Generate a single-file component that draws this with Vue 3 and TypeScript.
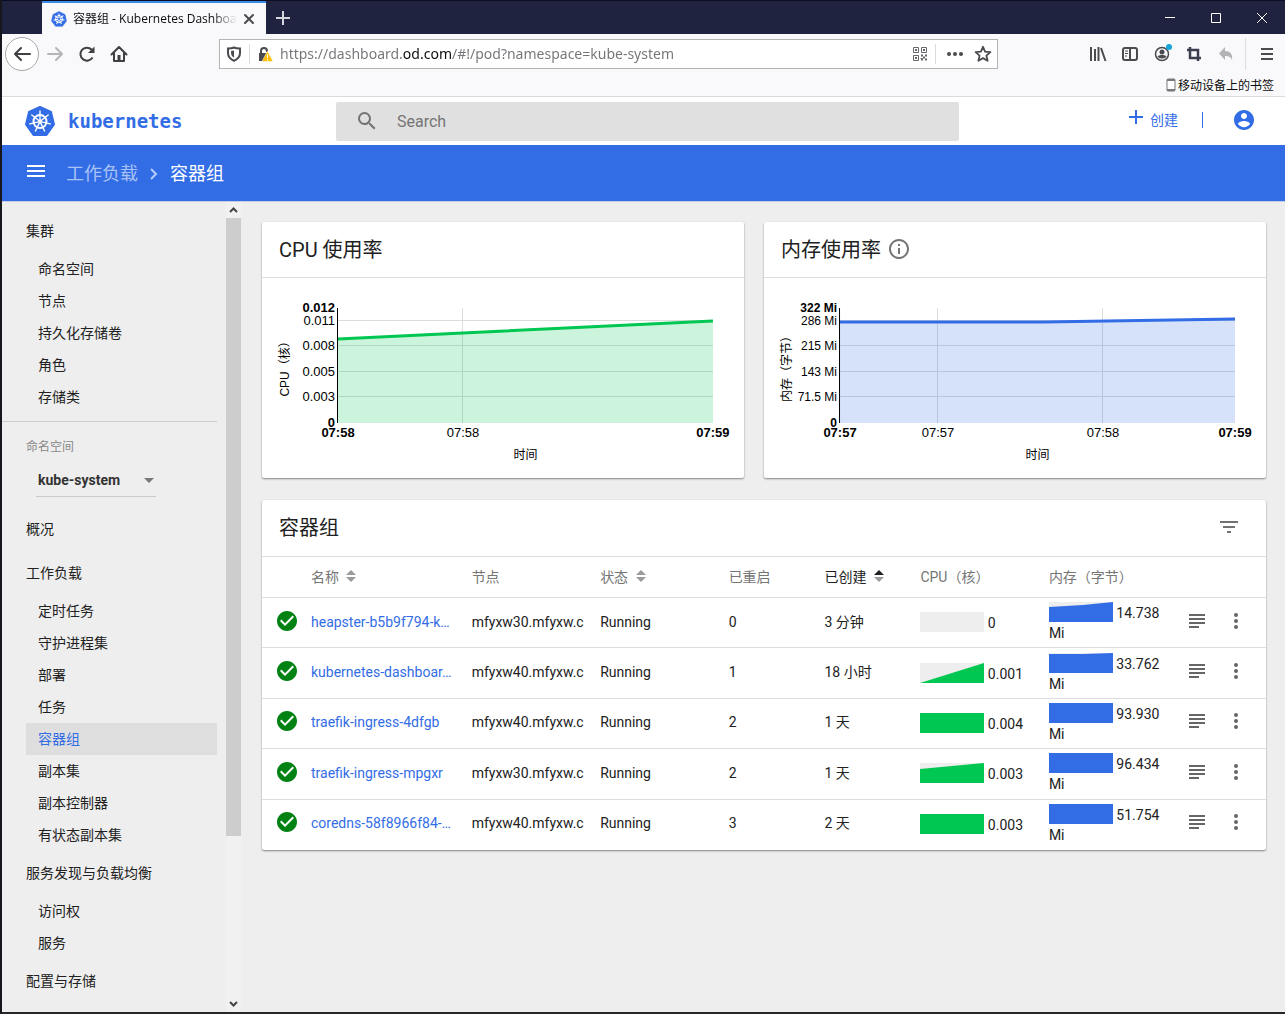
<script setup lang="ts">
import { ref } from 'vue'

interface NavGroup {
  title: string
  items: string[]
}

interface Tick {
  label: string
  at: number
  bold?: boolean
}

interface Chart {
  id: string
  title: string
  info: boolean
  width: number
  axis: string
  color: string
  labelSize: string
  left: number
  right: number
  xTicks: Tick[]
  yTicks: Tick[]
  points: [number, number][]
}

interface Pod {
  name: string
  node: string
  status: string
  restarts: number
  age: string
  cpu: string
  cpuShape: string
  memory: string
  memoryShape: string
}

const url = ref('https://dashboard.od.com/#!/pod?namespace=kube-system')
const query = ref('')
const namespace = ref('kube-system')
const activeItem = '容器组'

const cluster: NavGroup = { title: '集群', items: ['命名空间', '节点', '持久化存储卷', '角色', '存储类'] }

const groups: NavGroup[] = [
  { title: '概况', items: [] },
  { title: '工作负载', items: ['定时任务', '守护进程集', '部署', '任务', '容器组', '副本集', '副本控制器', '有状态副本集'] },
  { title: '服务发现与负载均衡', items: ['访问权', '服务'] },
  { title: '配置与存储', items: [] },
]

const spokes = [0, 1, 2, 3, 4, 5, 6].map((i) => (i * 360) / 7)

const charts: Chart[] = [
  {
    id: 'cpu',
    title: 'CPU 使用率',
    info: false,
    width: 482,
    axis: 'CPU（核）',
    color: '#00c752',
    labelSize: 'wide',
    left: 76,
    right: 451,
    xTicks: [
      { label: '07:58', at: 76, bold: true },
      { label: '07:58', at: 201 },
      { label: '07:59', at: 451, bold: true },
    ],
    yTicks: [
      { label: '0.012', at: 30, bold: true },
      { label: '0.011', at: 43 },
      { label: '0.008', at: 68 },
      { label: '0.005', at: 94 },
      { label: '0.003', at: 119 },
      { label: '0', at: 145, bold: true },
    ],
    points: [[76, 61], [201, 55], [451, 43]],
  },
  {
    id: 'memory',
    title: '内存使用率',
    info: true,
    width: 502,
    axis: '内存（字节）',
    color: '#326de6',
    labelSize: 'narrow',
    left: 76,
    right: 471,
    xTicks: [
      { label: '07:57', at: 76, bold: true },
      { label: '07:57', at: 174 },
      { label: '07:58', at: 339 },
      { label: '07:59', at: 471, bold: true },
    ],
    yTicks: [
      { label: '322 Mi', at: 30, bold: true },
      { label: '286 Mi', at: 43 },
      { label: '215 Mi', at: 68 },
      { label: '143 Mi', at: 94 },
      { label: '71.5 Mi', at: 119 },
      { label: '0', at: 145, bold: true },
    ],
    points: [[76, 44], [280, 44], [471, 41]],
  },
]

const linePath = (c: Chart): string => 'M' + c.points.map((p) => p.join(' ')).join('L')
const areaPath = (c: Chart): string => `${linePath(c)}V145H${c.left}Z`

const columns = [
  { key: 'name', label: '名称', sort: 'none' },
  { key: 'node', label: '节点', sort: '' },
  { key: 'status', label: '状态', sort: 'none' },
  { key: 'restarts', label: '已重启', sort: '' },
  { key: 'age', label: '已创建', sort: 'up' },
  { key: 'cpu', label: 'CPU（核）', sort: '' },
  { key: 'memory', label: '内存（字节）', sort: '' },
]

const pods: Pod[] = [
  { name: 'heapster-b5b9f794-k…', node: 'mfyxw30.mfyxw.c', status: 'Running', restarts: 0, age: '3 分钟', cpu: '0', cpuShape: '', memory: '14.738 Mi', memoryShape: '0,5 34,3 64,0 64,20 0,20' },
  { name: 'kubernetes-dashboar…', node: 'mfyxw40.mfyxw.c', status: 'Running', restarts: 1, age: '18 小时', cpu: '0.001', cpuShape: '0,20 64,0 64,20', memory: '33.762 Mi', memoryShape: '0,1 34,1 64,0 64,20 0,20' },
  { name: 'traefik-ingress-4dfgb', node: 'mfyxw40.mfyxw.c', status: 'Running', restarts: 2, age: '1 天', cpu: '0.004', cpuShape: '0,0 64,0 64,20 0,20', memory: '93.930 Mi', memoryShape: '0,0 64,0 64,20 0,20' },
  { name: 'traefik-ingress-mpgxr', node: 'mfyxw30.mfyxw.c', status: 'Running', restarts: 2, age: '1 天', cpu: '0.003', cpuShape: '0,6 64,0 64,20 0,20', memory: '96.434 Mi', memoryShape: '0,0 64,0 64,20 0,20' },
  { name: 'coredns-58f8966f84-…', node: 'mfyxw40.mfyxw.c', status: 'Running', restarts: 3, age: '2 天', cpu: '0.003', cpuShape: '0,0 64,0 64,20 0,20', memory: '51.754 Mi', memoryShape: '0,0 64,0 64,20 0,20' },
]
</script>

<template>
  <div class="window">
    <div class="titlebar">
      <div class="tab">
        <svg class="tab-logo" viewBox="0 0 32 32" aria-hidden="true">
          <path d="M16 1 28 7 31 20 23 30.500H9L1 20 4 7Z" fill="#326de6" stroke="#326de6" stroke-linejoin="round" />
          <g stroke="#fff" fill="none" stroke-width="2">
            <circle cx="16" cy="16" r="7" />
            <path v-for="a in spokes" :key="a" d="M16 14V5" :transform="`rotate(${a} 16 16)`" />
          </g>
        </svg>
        <span class="tab-title">容器组 - Kubernetes Dashboard</span>
        <button class="plain" aria-label="关闭标签页">
          <svg width="12" height="12" viewBox="0 0 12 12"><path d="M2 2l8 8M10 2l-8 8" stroke="#4a4a4f" stroke-width="2" stroke-linecap="round" /></svg>
        </button>
      </div>
      <button class="plain new-tab" aria-label="新建标签页">
        <svg width="14" height="14" viewBox="0 0 14 14"><path d="M7 0v14M0 7h14" stroke="#d5d5de" stroke-width="2" /></svg>
      </button>
      <div class="window-controls">
        <button class="plain" aria-label="最小化"><svg width="12" height="12" viewBox="0 0 12 12"><path d="M1 5.500h10" stroke="#fff" /></svg></button>
        <button class="plain" aria-label="最大化"><svg width="12" height="12" viewBox="0 0 12 12"><path d="M1.500 1.500h9v9h-9z" stroke="#fff" fill="none" /></svg></button>
        <button class="plain" aria-label="关闭"><svg width="12" height="12" viewBox="0 0 12 12"><path d="M1 1l10 10M11 1L1 11" stroke="#fff" /></svg></button>
      </div>
    </div>

    <div class="toolbar">
      <div class="history">
        <button class="plain back" aria-label="后退">
          <svg width="18" height="18" viewBox="0 0 18 18"><path d="M17 9H2M8 3 2 9l6 6" fill="none" stroke="#3f3f44" stroke-width="2" stroke-linejoin="round" stroke-linecap="round" /></svg>
        </button>
        <button class="plain" aria-label="前进">
          <svg width="18" height="18" viewBox="0 0 18 18"><path d="M2 9h14M10 3l6 6-6 6" fill="none" stroke="#b4b4b8" stroke-width="2" stroke-linejoin="round" stroke-linecap="round" /></svg>
        </button>
        <button class="plain" aria-label="刷新">
          <svg width="18" height="18" viewBox="0 0 18 18"><path d="M14.500 12.500A6.500 6.500 0 1 1 13.500 4.500L15 6" fill="none" stroke="#3f3f44" stroke-width="2" /><path d="M16.500 1.500V8H10z" fill="#3f3f44" /></svg>
        </button>
        <button class="plain" aria-label="主页">
          <svg width="18" height="18" viewBox="0 0 18 18"><path d="M1.500 9.500 9 2l7.500 7.500M4 8.500V16h10V8.500" fill="none" stroke="#3f3f44" stroke-width="2" stroke-linejoin="round" stroke-linecap="round" /><path d="M7.500 10h3v6h-3z" fill="#3f3f44" /></svg>
        </button>
      </div>

      <div class="address">
        <svg width="16" height="16" viewBox="0 0 16 16"><path d="M8 1.500c2 1 4 1 6 1v4.500c0 4-3 6.500-6 7.800C5 13.500 2 11 2 7V2.500c2 0 4 0 6-1z" fill="none" stroke="#4a4a4f" stroke-width="2" /><path d="M8 4.500v7C5.500 10 5 9 5 5z" fill="#4a4a4f" /></svg>
        <span class="bar"></span>
        <svg width="16" height="16" viewBox="0 0 16 16"><path d="M4 7V5a3 3 0 0 1 6 0v1" fill="none" stroke="#4a4a4f" stroke-width="2" /><path d="M2 7h9v8H2z" fill="#4a4a4f" /><path d="M10.500 5 16 15.500H5z" fill="#ffbf00" stroke="#fff" stroke-width="0.500" /><path d="M10.500 8.500v3.500M10.500 13v1.500" stroke="#fff" /></svg>
        <input v-model="url" class="url" type="text" aria-label="网址" />
        <svg width="16" height="16" viewBox="0 0 16 16" fill="none" stroke="#66666b"><path d="M1.500 1.500h5v5h-5zM9.500 1.500h5v5h-5zM1.500 9.500h5v5h-5z" /><path d="M3 4h2M11 4h2M3 12h2" stroke-width="2" /><path d="M9 9.500h2M13 9.500h2M11 11.500h2M9 13.500h2M13 13.500h2M9.500 12v1" stroke-width="2" /></svg>
        <span class="bar"></span>
        <button class="plain dots" aria-label="页面操作"><svg width="18" height="6" viewBox="0 0 18 6" fill="#4a4a4f"><circle cx="3" cy="3" r="2" /><circle cx="9" cy="3" r="2" /><circle cx="15" cy="3" r="2" /></svg></button>
        <button class="plain" aria-label="添加书签"><svg width="18" height="18" viewBox="0 0 18 18"><path d="M9 1.800l2.100 4.800 5.300.5-4 3.500 1.200 5.200L9 13.100l-4.600 2.700 1.200-5.200-4-3.500 5.300-.5z" fill="none" stroke="#4a4a4f" stroke-width="1.800" stroke-linejoin="round" /></svg></button>
      </div>

      <div class="tools">
        <button class="plain" aria-label="我的足迹"><svg width="18" height="16" viewBox="0 0 18 16"><path d="M2 1v14M6 3v12M9.500 1v14M12 2l4.500 13" stroke="#4a4a4f" stroke-width="2" fill="none" /></svg></button>
        <button class="plain" aria-label="侧栏"><svg width="18" height="16" viewBox="0 0 18 16"><rect x="2" y="2" width="14" height="12" rx="2" fill="none" stroke="#4a4a4f" stroke-width="2" /><path d="M9 2v12" stroke="#4a4a4f" stroke-width="2" /><path d="M4 5h3M4 7.500h3M4 10h2" stroke="#4a4a4f" /></svg></button>
        <button class="plain" aria-label="账户"><svg width="20" height="20" viewBox="0 0 20 20"><circle cx="10" cy="10" r="6.500" fill="none" stroke="#4a4a4f" stroke-width="1.500" /><circle cx="10" cy="8" r="2.500" fill="#4a4a4f" /><path d="M5.500 12.500c1-2 8-2 9 0-1.500 2.500-7.500 2.500-9 0z" fill="#4a4a4f" /><circle cx="17" cy="3" r="3" fill="#12a7d8" /></svg></button>
        <button class="plain" aria-label="截图"><svg width="16" height="16" viewBox="0 0 16 16"><path d="M4 1v11h11M1 4h11v11" fill="none" stroke="#3d3d52" stroke-width="2.500" /></svg></button>
        <button class="plain" aria-label="撤销"><svg width="16" height="16" viewBox="0 0 16 16"><path d="M7 1v4c5 0 8 3 7 9-1-3-3-4-7-4v4L1 7.500z" fill="#b4b4b8" /></svg></button>
        <span class="tools-bar"></span>
        <button class="plain" aria-label="菜单"><svg width="14" height="14" viewBox="0 0 14 14"><path d="M1 2h12M1 7h12M1 12h12" stroke="#4a4a4f" stroke-width="2" /></svg></button>
      </div>
    </div>

    <div class="bookmarks">
      <a href="#">
        <svg width="10" height="14" viewBox="0 0 10 14"><rect x="1" y="1" width="8" height="12" rx="1" fill="#fff" stroke="#77787c" /><path d="M1 2h8M1 12h8" stroke="#77787c" stroke-width="2" /></svg>
        移动设备上的书签
      </a>
    </div>

    <header class="app-header">
      <a class="brand" href="#">
        <svg width="32" height="32" viewBox="0 0 32 32" aria-hidden="true">
          <path d="M16 2 27 7 30 19.500 22.500 30h-13L2 19.500 5 7Z" fill="#326de6" stroke="#326de6" stroke-width="2" stroke-linejoin="round" />
          <g stroke="#fff" fill="none">
            <circle cx="16" cy="16.500" r="6.500" stroke-width="2" />
            <path v-for="a in spokes" :key="a" d="M16 15V6" stroke-width="1.400" stroke-linecap="round" :transform="`rotate(${a} 16 16.500)`" />
            <circle cx="16" cy="16.500" r="1.500" fill="#fff" />
          </g>
        </svg>
        <span>kubernetes</span>
      </a>
      <label class="search">
        <svg width="24" height="24" viewBox="0 0 24 24"><path d="M15.500 14h-.79l-.28-.27A6.471 6.471 0 0 0 16 9.500 6.500 6.500 0 1 0 9.500 16c1.610 0 3.090-.59 4.230-1.570l.27.28v.79l5 4.990L20.490 19l-4.990-5zm-6 0C7.010 14 5 11.990 5 9.500S7.010 5 9.500 5 14 7.010 14 9.500 11.990 14 9.500 14z" fill="#727272" /></svg>
        <input v-model="query" type="text" placeholder="Search" aria-label="Search" />
      </label>
      <div class="actions">
        <button class="plain create">
          <svg width="14" height="14" viewBox="0 0 14 14"><path d="M7 0v14M0 7h14" stroke="#326de6" stroke-width="2" /></svg>
          <span>创建</span>
        </button>
        <span class="divider"></span>
        <button class="plain" aria-label="用户">
          <svg width="24" height="24" viewBox="0 0 24 24"><path d="M12 2C6.480 2 2 6.480 2 12s4.480 10 10 10 10-4.480 10-10S17.520 2 12 2zm0 3c1.660 0 3 1.340 3 3s-1.340 3-3 3-3-1.340-3-3 1.340-3 3-3zm0 14.200c-2.500 0-4.710-1.280-6-3.220.03-1.990 4-3.080 6-3.080 1.990 0 5.970 1.090 6 3.080-1.290 1.940-3.500 3.220-6 3.220z" fill="#326de6" /></svg>
        </button>
      </div>
    </header>

    <nav class="crumbs" aria-label="路径">
      <button class="plain" aria-label="切换菜单"><svg width="18" height="12" viewBox="0 0 18 12"><path d="M0 1h18M0 6h18M0 11h18" stroke="#fff" stroke-width="2" /></svg></button>
      <div class="trail">
        <a href="#">工作负载</a>
        <svg width="8" height="12" viewBox="0 0 8 12"><path d="M1 1l5 5-5 5" fill="none" stroke="#b8ccf7" stroke-width="2" /></svg>
        <span>容器组</span>
      </div>
    </nav>

    <div class="body">
      <aside class="sidebar">
        <nav class="menu">
          <a class="heading" href="#">{{ cluster.title }}</a>
          <a v-for="item in cluster.items" :key="item" class="item" href="#">{{ item }}</a>
          <div class="namespace">
            <label for="namespace">命名空间</label>
            <div class="select">
              <select id="namespace" v-model="namespace">
                <option>kube-system</option>
                <option>default</option>
              </select>
              <svg width="10" height="5" viewBox="0 0 10 5"><path d="M0 0h10L5 5z" fill="#777" /></svg>
            </div>
          </div>
          <template v-for="group in groups" :key="group.title">
            <a class="heading" href="#">{{ group.title }}</a>
            <a v-for="item in group.items" :key="item" class="item" :class="{ active: item === activeItem }" href="#">{{ item }}</a>
          </template>
        </nav>
        <div class="scrollbar" aria-hidden="true">
          <svg width="15" height="16" viewBox="0 0 15 16"><path d="M4 10l3.500-3.500L11 10" fill="none" stroke="#444" stroke-width="2" /></svg>
          <div class="track"><div class="thumb"></div></div>
          <svg width="15" height="16" viewBox="0 0 15 16"><path d="M4 6l3.500 3.500L11 6" fill="none" stroke="#444" stroke-width="2" /></svg>
        </div>
      </aside>

      <main class="content">
        <div class="charts">
          <section v-for="chart in charts" :key="chart.id" class="card">
            <h2 class="card-title">
              {{ chart.title }}
              <svg v-if="chart.info" width="24" height="24" viewBox="0 0 24 24"><path d="M11 17h2v-6h-2v6zm1-15C6.480 2 2 6.480 2 12s4.480 10 10 10 10-4.480 10-10S17.520 2 12 2zm0 18c-4.410 0-8-3.590-8-8s3.590-8 8-8 8 3.590 8 8-3.590 8-8 8zM11 9h2V7h-2v2z" fill="#757575" /></svg>
            </h2>
            <svg class="chart" :viewBox="`0 0 ${chart.width} 200`" role="img" :aria-label="chart.title">
              <g class="grid">
                <path v-for="t in chart.yTicks.slice(1, 5)" :key="t.label" :d="`M${chart.left} ${t.at - 0.5}H${chart.right}`" />
                <path v-for="t in chart.xTicks.slice(1, -1)" :key="t.at" :d="`M${t.at - 0.5} 30V145`" />
              </g>
              <path :d="areaPath(chart)" :fill="chart.color" fill-opacity="0.2" />
              <path :d="linePath(chart)" fill="none" :stroke="chart.color" stroke-width="3" />
              <path :d="`M${chart.left - 0.5} 30V145`" stroke="#000" />
              <g class="labels">
                <text v-for="t in chart.yTicks" :key="t.label" x="73" :y="t.at + 4" text-anchor="end" :class="[chart.labelSize, { bold: t.bold }]">{{ t.label }}</text>
                <text v-for="t in chart.xTicks" :key="t.at" :x="t.at" y="159" text-anchor="middle" class="wide" :class="{ bold: t.bold }">{{ t.label }}</text>
                <text :x="(chart.left + chart.right) / 2" y="181" text-anchor="middle">时间</text>
                <text text-anchor="middle" transform="translate(27 88) rotate(-90)">{{ chart.axis }}</text>
              </g>
            </svg>
          </section>
        </div>

        <section class="card">
          <div class="card-title list-title">
            <h2>容器组</h2>
            <button class="plain" aria-label="筛选"><svg width="24" height="24" viewBox="0 0 24 24"><path d="M10 18h4v-2h-4v2zM3 6v2h18V6H3zm3 7h12v-2H6v2z" fill="#727272" /></svg></button>
          </div>
          <table>
            <colgroup>
              <col class="c-icon" /><col class="c-l" /><col class="c-m" /><col class="c-m" /><col class="c-s" /><col class="c-s" /><col class="c-m" /><col class="c-m" /><col class="c-act" /><col />
            </colgroup>
            <thead>
              <tr>
                <th></th>
                <th v-for="col in columns" :key="col.key" scope="col" :class="{ sorted: col.sort === 'up' }">
                  {{ col.label }}
                  <svg v-if="col.sort" class="sort" width="12" height="14" viewBox="0 0 12 14">
                    <path d="M1 6h10L6 1z" :fill="col.sort === 'up' ? '#212121' : '#9a9a9a'" />
                    <path d="M1 8h10l-5 5z" fill="#9a9a9a" />
                  </svg>
                </th>
                <th></th>
                <th></th>
              </tr>
            </thead>
            <tbody>
              <tr v-for="pod in pods" :key="pod.name">
                <td class="state">
                  <svg width="24" height="24" viewBox="0 0 24 24"><path d="M12 2C6.480 2 2 6.480 2 12s4.480 10 10 10 10-4.480 10-10S17.520 2 12 2zm-2 15l-5-5 1.410-1.410L10 14.170l7.590-7.590L19 8l-9 9z" fill="#018213" /></svg>
                </td>
                <td><a href="#">{{ pod.name }}</a></td>
                <td>{{ pod.node }}</td>
                <td>{{ pod.status }}</td>
                <td>{{ pod.restarts }}</td>
                <td>{{ pod.age }}</td>
                <td class="usage">
                  <svg class="spark" viewBox="0 0 64 20"><polygon :points="pod.cpuShape" fill="#00c752" /></svg>
                  {{ pod.cpu }}
                </td>
                <td class="usage">
                  <svg class="spark" viewBox="0 0 64 20"><polygon :points="pod.memoryShape" fill="#326de6" /></svg>
                  {{ pod.memory }}
                </td>
                <td class="act"><button class="plain" aria-label="日志"><svg width="24" height="24" viewBox="0 0 24 24"><path d="M4 6h16M4 10h16M4 14h16M4 18h10" stroke="#666" stroke-width="2" /></svg></button></td>
                <td class="act"><button class="plain" aria-label="操作"><svg width="24" height="24" viewBox="0 0 24 24" fill="#666"><circle cx="12" cy="6" r="2" /><circle cx="12" cy="12" r="2" /><circle cx="12" cy="18" r="2" /></svg></button></td>
              </tr>
            </tbody>
          </table>
        </section>
      </main>
    </div>
  </div>
</template>

<style>
body {
  margin: 0;
  background: #eee;
}
</style>

<style scoped>
* {
  box-sizing: border-box;
}

.window {
  display: flex;
  flex-direction: column;
  min-height: 100vh;
  border-left: 2px solid #16161c;
  border-bottom: 2px solid #26262b;
  background: #eee;
  color: #212121;
  font: 14px/20px Roboto, "Noto Sans CJK SC", sans-serif;
}

a {
  color: inherit;
  text-decoration: none;
}

svg {
  flex: none;
  display: block;
}

.plain {
  display: flex;
  flex: none;
  align-items: center;
  justify-content: center;
  padding: 0;
  border: 0;
  background: none;
  font: inherit;
  color: inherit;
}

/* browser frame */
.titlebar {
  display: flex;
  height: 34px;
  padding-left: 40px;
  border-top: 1px solid #0b0c22;
  background: #202340;
}

.tab {
  display: flex;
  align-items: center;
  width: 224px;
  padding: 0 11px 0 9px;
  border-top: 2px solid #3b8be6;
  background: #f9f9fb;
  color: #0c0c0d;
  font: 12px/18px "Open Sans", "Noto Sans CJK SC", sans-serif;
}

.tab-logo {
  width: 16px;
  height: 16px;
  margin-right: 6px;
}

.tab-title {
  flex: 1;
  overflow: hidden;
  white-space: nowrap;
  margin-right: 6px;
  mask-image: linear-gradient(to right, #000 85%, transparent);
}

.new-tab {
  width: 34px;
}

.window-controls {
  display: flex;
  margin-left: auto;
}

.window-controls .plain {
  width: 46px;
}

.toolbar {
  display: flex;
  align-items: center;
  height: 40px;
  background: #f9f9fb;
}

.history {
  display: flex;
  align-items: center;
  gap: 14px;
  width: 217px;
  padding-left: 3px;
}

.back {
  width: 34px;
  height: 34px;
  margin-right: -7px;
  border: 1px solid #a8a8ac;
  border-radius: 50%;
  background: #fff;
}

.address {
  display: flex;
  flex: 1;
  align-items: center;
  gap: 7px;
  height: 30px;
  padding: 0 5px 0 6px;
  border: 1px solid #b3b3b6;
  background: #fff;
}

.dots {
  width: 24px;
}

.bar {
  width: 1px;
  height: 20px;
  background: #dcdcdf;
}

.url {
  flex: 1;
  min-width: 0;
  padding: 0;
  border: 0;
  outline: 0;
  color: transparent;
  background: linear-gradient(to right, #737378 123px, #0c0c0d 123px, #0c0c0d 171px, #737378 171px);
  background-clip: text;
  font: 14px/20px "Noto Sans", sans-serif;
}

.tools {
  display: flex;
  align-items: center;
  justify-content: flex-end;
  gap: 14px;
  width: 287px;
  padding-right: 9px;
}

.tools .plain {
  width: 18px;
}

.tools-bar {
  width: 1px;
  height: 32px;
  margin: 0 -2px 0 -4px;
  background: #dcdcdf;
}

.bookmarks {
  display: flex;
  justify-content: flex-end;
  height: 23px;
  padding-right: 11px;
  border-bottom: 1px solid #dcdcdf;
  background: #f9f9fb;
  color: #0c0c0d;
  font: 12px/20px "Noto Sans CJK SC", sans-serif;
}

.bookmarks a {
  display: flex;
  align-items: center;
  gap: 2px;
}

/* dashboard header */
.app-header {
  display: flex;
  align-items: center;
  height: 48px;
  background: #fff;
}

.brand {
  display: flex;
  align-items: center;
  gap: 12px;
  width: 334px;
  padding-left: 22px;
  color: #326de6;
  font: bold 19px/24px "DejaVu Sans Mono", monospace;
}

.search {
  display: flex;
  flex: 1;
  align-items: center;
  gap: 18px;
  height: 39px;
  padding: 0 19px;
  border-radius: 2px;
  background: #e0e0e0;
}

.search input {
  flex: 1;
  min-width: 0;
  padding: 2px 0 0;
  border: 0;
  outline: 0;
  background: none;
  color: #212121;
  font: 16px/20px Roboto, sans-serif;
}

.search input::placeholder {
  color: #757575;
}

.actions {
  display: flex;
  align-items: center;
  justify-content: flex-end;
  gap: 24px;
  width: 326px;
  padding: 0 29px 2px 0;
}

.create {
  align-items: flex-start;
  gap: 7px;
  color: #326de6;
}

.divider {
  width: 1px;
  height: 16px;
  margin-right: 5px;
  background: #326de6;
}

.crumbs {
  display: flex;
  align-items: center;
  gap: 21px;
  height: 56px;
  padding-left: 25px;
  background: #326de6;
  color: #fff;
  font-size: 18px;
  line-height: 24px;
}

.crumbs .plain {
  padding-bottom: 4px;
}

.trail {
  display: flex;
  align-items: center;
  gap: 12px;
  padding-top: 2px;
}

.trail a {
  color: #a9c2f5;
}

.body {
  display: flex;
  flex: 1;
  border-top: 1px solid #c9cbe6;
}

/* sidebar */
.sidebar {
  display: flex;
  width: 239px;
}

.menu {
  display: flex;
  flex: 1;
  flex-direction: column;
  padding: 7px 9px 0 0;
}

.heading {
  padding-left: 24px;
  line-height: 44px;
}

.item {
  margin-left: 24px;
  padding-left: 12px;
  line-height: 32px;
}

.item.active {
  background: #dedede;
  color: #326de6;
}

.namespace {
  margin-top: 8px;
  padding: 16px 0 10px 24px;
  border-top: 1px solid #ccc;
}

.namespace label {
  display: block;
  color: #888;
  font-size: 12px;
  line-height: 18px;
}

.select {
  display: flex;
  align-items: center;
  width: 120px;
  height: 33px;
  margin: 8px 0 0 10px;
  padding: 0 2px;
  border-bottom: 1px solid #ccc;
}

.select select {
  flex: 1;
  padding: 0;
  border: 0;
  outline: 0;
  appearance: none;
  background: none;
  color: #333;
  font: bold 14px/20px Roboto, sans-serif;
}

.scrollbar {
  display: flex;
  flex-direction: column;
  width: 15px;
  background: #f1f1f1;
}

.track {
  flex: 1;
}

.thumb {
  height: 79.4%;
  background: #cdcdcd;
}

/* content */
.content {
  flex: 1;
  min-width: 0;
  padding: 20px 19px 20px 21px;
}

.charts {
  display: grid;
  grid-template-columns: 24fr 25fr;
  gap: 20px;
  margin-bottom: 22px;
}

.card {
  border-radius: 2px;
  background: #fff;
  box-shadow: 0 1px 2px rgba(0, 0, 0, 0.45);
}

.card-title {
  display: flex;
  align-items: center;
  gap: 6px;
  height: 56px;
  margin: 0;
  padding: 0 17px;
  border-bottom: 1px solid #ddd;
  font-size: 20px;
  font-weight: 400;
  line-height: 28px;
}

.card-title svg {
  margin-bottom: 2px;
}

.list-title {
  justify-content: space-between;
  height: 57px;
  padding-right: 25px;
}

.list-title h2 {
  margin: 0;
  font: inherit;
}

.chart {
  width: 100%;
}

.grid path {
  stroke: #dcdcdc;
}

.labels text {
  fill: #000;
  font-family: "Liberation Sans", "Noto Sans CJK SC", sans-serif;
  font-size: 12px;
}

.labels .wide {
  font-size: 13px;
}

.labels .bold {
  font-weight: bold;
}

/* pod list */
table {
  width: 100%;
  height: 293px;
  border-collapse: separate;
  border-spacing: 0;
  table-layout: fixed;
}

.c-icon {
  width: 49px;
}

.c-l {
  width: 16%;
}

.c-m {
  width: 12.8%;
}

.c-s {
  width: 9.55%;
}

.c-act {
  width: 39px;
}

th,
td {
  overflow: hidden;
  padding: 0 16px 0 0;
  border-bottom: 1px solid #ddd;
  text-align: left;
  white-space: nowrap;
}

td {
  padding-bottom: 2px;
}

th {
  height: 41px;
  color: #757575;
  font-weight: 400;
}

th.sorted {
  color: #212121;
}

tbody tr:last-child td {
  border-bottom-color: transparent;
}

td a {
  color: #326de6;
}

.sort {
  display: inline-block;
  margin-left: 3px;
  vertical-align: -1px;
}

.state {
  padding: 0 0 4px 13px;
}

.usage {
  padding-bottom: 0;
  white-space: normal;
}

.spark {
  display: inline-block;
  width: 64px;
  height: 20px;
  background: #eee;
  vertical-align: -4px;
}

.act {
  padding: 0 0 4px;
}

.act .plain {
  width: 39px;
}
</style>
